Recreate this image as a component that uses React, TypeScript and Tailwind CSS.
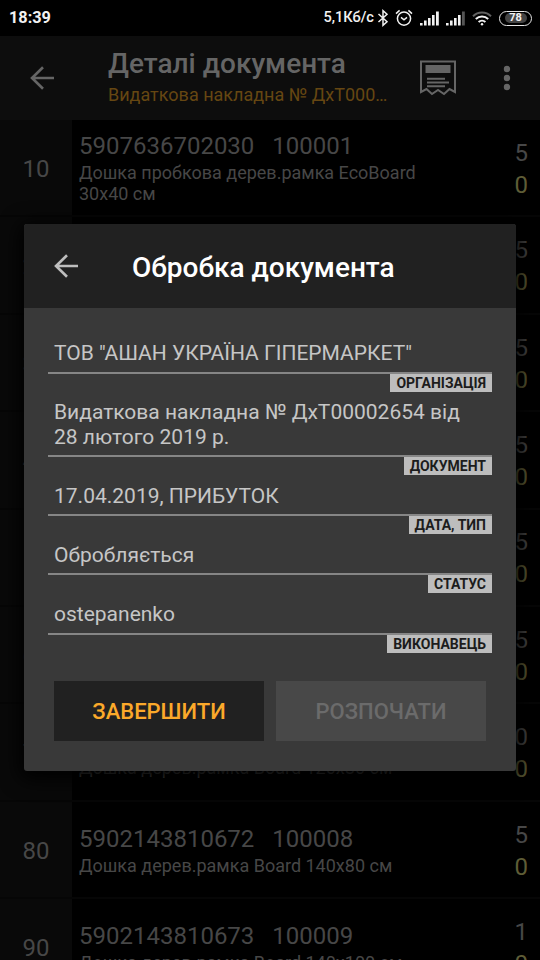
import { clsx } from "clsx";

type Item = {
  pos: string;
  barcode: string;
  code: string;
  name: string;
  planned: number;
  done: number;
};

const items: Item[] = [
  { pos: "10", barcode: "5907636702030", code: "100001", name: "Дошка пробкова дерев.рамка EcoBoard 30x40 см", planned: 5, done: 0 },
  { pos: "20", barcode: "5907636702047", code: "100002", name: "Дошка пробкова дерев.рамка EcoBoard 40x60 см", planned: 5, done: 0 },
  { pos: "30", barcode: "5902143810634", code: "100003", name: "Дошка дерев.рамка Board 60x40 см", planned: 5, done: 0 },
  { pos: "40", barcode: "5902143810641", code: "100004", name: "Дошка дерев.рамка Board 80x60 см", planned: 5, done: 0 },
  { pos: "50", barcode: "5902143810658", code: "100005", name: "Дошка дерев.рамка Board 90x60 см", planned: 5, done: 0 },
  { pos: "60", barcode: "5902143810665", code: "100006", name: "Дошка дерев.рамка Board 100x80 см", planned: 5, done: 0 },
  { pos: "70", barcode: "5902143810671", code: "100007", name: "Дошка дерев.рамка Board 120x80 см", planned: 10, done: 0 },
  { pos: "80", barcode: "5902143810672", code: "100008", name: "Дошка дерев.рамка Board 140x80 см", planned: 5, done: 0 },
  { pos: "90", barcode: "5902143810673", code: "100009", name: "Дошка дерев.рамка Board 140x100 см", planned: 1, done: 0 },
];

const fields = [
  { label: "ОРГАНІЗАЦІЯ", value: 'ТОВ "АШАН УКРАЇНА ГІПЕРМАРКЕТ"' },
  { label: "ДОКУМЕНТ", value: "Видаткова накладна № ДхТ00002654 від 28 лютого 2019 р." },
  { label: "ДАТА, ТИП", value: "17.04.2019, ПРИБУТОК" },
  { label: "СТАТУС", value: "Обробляється" },
  { label: "ВИКОНАВЕЦЬ", value: "ostepanenko" },
];

function BackArrow({ className }: { className?: string }) {
  return (
    <svg viewBox="0 0 24 24" className={clsx("h-6 w-6 shrink-0", className)} fill="none" stroke="currentColor" strokeWidth="2.6">
      <path d="M24 12H2M13 1.2 2 12l11 10.8" />
    </svg>
  );
}

function Signal({ weak }: { weak?: boolean }) {
  return (
    <svg viewBox="0 0 20 15" className="h-[15px] w-5" fill="currentColor">
      <rect x="0" y="12" width="2.6" height="2.5" />
      <rect x="4" y="9.5" width="2.6" height="5" />
      <rect x="8" y="7" width="2.6" height="7.5" />
      <rect x="12" y="4" width="2.6" height="10.5" />
      <rect x="16" y="0.5" width="2.8" height="14" opacity={weak ? 0.35 : 1} />
    </svg>
  );
}

function StatusBar() {
  return (
    <div className="flex h-9 shrink-0 items-center bg-black pl-[9px] pr-[8px] text-[#f2f2f2]">
      <span className="text-[16.3px] font-bold">18:39</span>
      <span className="ml-auto text-[14.6px] font-medium">5,1Кб/с</span>
      {/* bluetooth */}
      <svg viewBox="0 0 12 18" className="ml-[3px] h-[18px] w-3" fill="none" stroke="currentColor" strokeWidth="1.5">
        <path d="M1.5 5 10 12.8 6 16.3V1.7L10 5.2 1.5 13" />
      </svg>
      {/* alarm */}
      <svg viewBox="0 0 18 18" className="ml-[6px] h-[18px] w-[18px]" fill="none" stroke="currentColor" strokeWidth="1.5">
        <circle cx="9" cy="9.6" r="6.6" />
        <path d="M1 4.6 4.6 1.4M17 4.6l-3.6-3.2M6 8.4l3 2.4 3-2.4" />
      </svg>
      <div className="ml-[7px] flex gap-[6px]">
        <Signal />
        <Signal weak />
      </div>
      {/* wifi */}
      <svg viewBox="0 0 20 15" className="ml-[6px] h-[15px] w-5" fill="none" stroke="currentColor" strokeWidth="2">
        <path d="M1 5.2a13 13 0 0 1 18 0" opacity="0.4" />
        <path d="M3.8 8a9 9 0 0 1 12.4 0M6.6 11a5 5 0 0 1 6.8 0" />
        <circle cx="10" cy="13.2" r="1.2" fill="currentColor" stroke="none" />
      </svg>
      <div className="ml-[7px] flex h-[15px] w-[33px] items-center justify-center rounded-full border-[1.5px] border-[#e6e6e6]">
        <span className="flex h-2.5 w-[22px] items-center justify-center rounded-full bg-[#444] text-[11px] font-bold">78</span>
      </div>
    </div>
  );
}

function AppBar() {
  return (
    <header className="flex h-[84px] shrink-0 items-center bg-[#0d0d0d] pl-[30px] pr-[29px]">
      <BackArrow className="text-[#656565]" />
      <div className="ml-[54px] w-[290px]">
        <h1 className="text-[28px] font-medium leading-[33px] text-[#656565]">Деталі документа</h1>
        <p className="truncate text-[18px] leading-[30px] text-[#664712]">Видаткова накладна № ДхТ000…</p>
      </div>
      <svg viewBox="0 0 36 36" className="ml-[22px] h-9 w-9 shrink-0 text-[#656565]" fill="none" stroke="currentColor" strokeWidth="2">
        <path d="M1 32V1.5h34V32l-5.5-3-5.5 5-6-4-6 4-5.5-5Z" />
        <path d="M5.500 5h25v8h-25z" fill="currentColor" stroke="none" />
        <path d="M7 18.700h18M7 22.500h22M7 26.300h18" />
      </svg>
      <svg viewBox="0 0 8 26" className="ml-auto h-[26px] w-2" fill="#656565">
        <circle cx="4" cy="4" r="3.200" />
        <circle cx="4" cy="13" r="3.200" />
        <circle cx="4" cy="22" r="3.200" />
      </svg>
    </header>
  );
}

function ItemRow({ item }: { item: Item }) {
  return (
    <li className="flex h-[97.42px] shrink-0 border-b-2 border-[#060606]">
      <div className="flex w-[72px] items-center justify-center bg-[#090909] pt-[2px] text-2xl text-[#474747]">{item.pos}</div>
      <div className="flex w-[360px] flex-col justify-center pl-[7px] text-[#474747]">
        <p className="whitespace-pre text-2xl leading-[31px]">{item.barcode + "   " + item.code}</p>
        <p className="text-[18px] leading-[21px]">{item.name}</p>
      </div>
      <div className="ml-auto flex flex-col items-end justify-center pr-[12px] pt-[2px] text-2xl leading-8">
        <span className="text-[#474747]">{item.planned}</span>
        <span className="text-[#5e5c36]">{item.done}</span>
      </div>
    </li>
  );
}

function Field({ label, value }: { label: string; value: string }) {
  return (
    <div className="flex flex-col">
      <p className="border-b-2 border-[#868686] px-[6px] pb-[6px] text-[21px] leading-[24.6px] text-[#c6c6c6]">{value}</p>
      <span className="h-[18px] self-end bg-[#bdbdbd] px-[6px] text-[14px] font-bold leading-[19px] text-[#1c1c1c]">{label}</span>
    </div>
  );
}

function ProcessDialog() {
  return (
    <div className="absolute left-6 top-56 flex h-[547px] w-[492px] flex-col overflow-hidden rounded-[3px] bg-[#393939] shadow-[0_4px_20px_4px_#000]">
      <div className="flex h-[84px] shrink-0 items-center bg-[#212121] pl-[30px]">
        <BackArrow className="text-[#bebebe]" />
        <h2 className="ml-[54px] pt-[3px] text-[28px] font-medium text-white">Обробка документа</h2>
      </div>
      <div className="flex flex-col gap-[8.500px] px-6 pt-[33px]">
        {fields.map((f) => (
          <Field key={f.label} label={f.label} value={f.value} />
        ))}
      </div>
      <div className="mb-[30px] mt-auto flex gap-3 px-[30px] text-[22px] font-medium">
        <button className="h-[60px] flex-1 bg-[#212121] text-[#fba92a]">ЗАВЕРШИТИ</button>
        <button className="h-[60px] flex-1 bg-[#484848] text-[#6b6b6b]" disabled>
          РОЗПОЧАТИ
        </button>
      </div>
    </div>
  );
}

export default function App() {
  return (
    <div className="relative flex h-[960px] w-[540px] flex-col overflow-hidden bg-black font-['Roboto',sans-serif]">
      <StatusBar />
      <AppBar />
      <ul className="flex flex-1 flex-col overflow-hidden">
        {items.map((item) => (
          <ItemRow key={item.pos} item={item} />
        ))}
      </ul>
      <ProcessDialog />
    </div>
  );
}
